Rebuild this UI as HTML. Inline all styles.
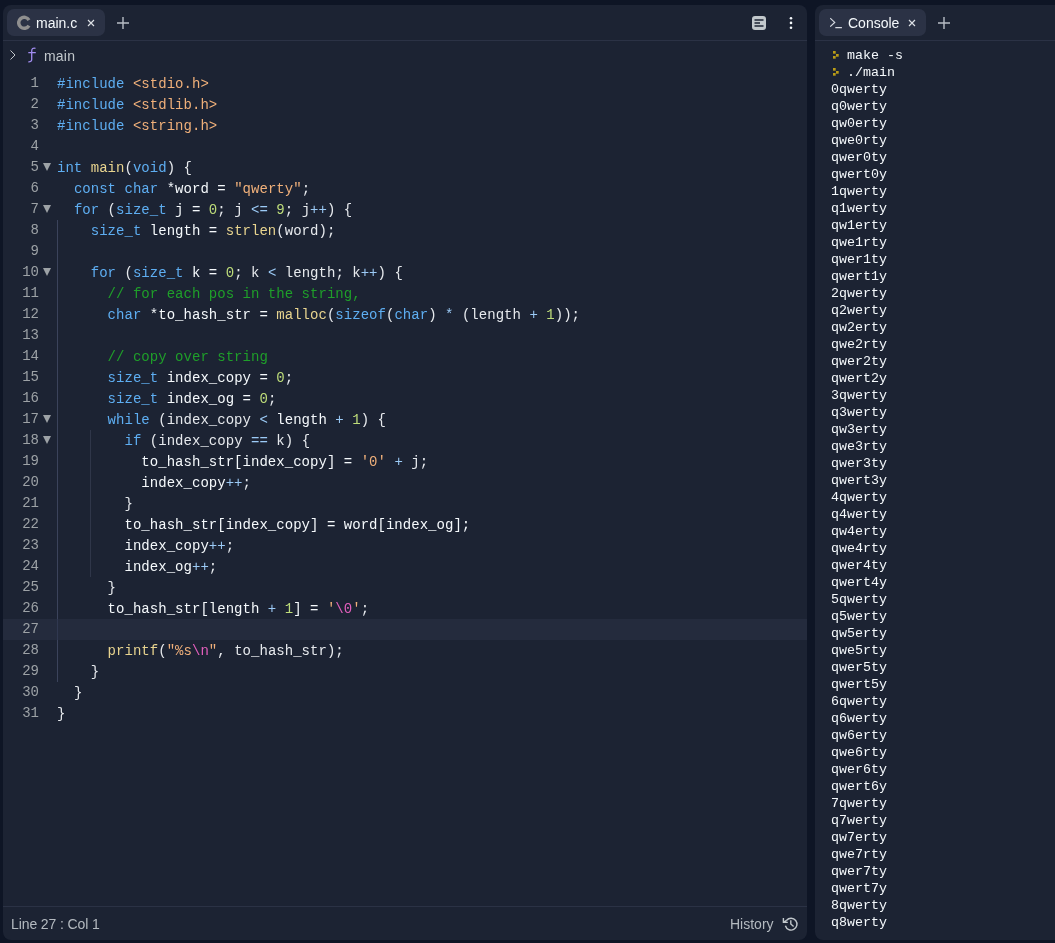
<!DOCTYPE html>
<html><head><meta charset="utf-8">
<style>
*{margin:0;padding:0;box-sizing:border-box}
html,body{width:1055px;height:943px;overflow:hidden;background:#0e1525;font-family:"Liberation Sans",sans-serif;-webkit-font-smoothing:antialiased}
.panel>*{will-change:transform}
.panel{position:absolute;background:#1c2333;border-radius:8px;overflow:hidden}
#left{left:3px;top:5px;width:804px;height:935px}
#right{left:815px;top:5px;width:260px;height:935px}
.sep{position:absolute;left:0;right:0;height:1px;background:#2b3245}
.tab{position:absolute;top:4px;height:27px;background:#2b3245;border-radius:7px}
.tabtxt{position:absolute;top:0;line-height:27px;font-size:14px;color:#f5f9fc;white-space:nowrap}
.x{position:absolute;top:0;}
.code{position:absolute;left:54px;top:68px;font-family:"Liberation Mono",monospace;font-size:14px;line-height:21px;color:#f5f9fc;letter-spacing:0.033px}
.gut{position:absolute;left:0;top:68px;width:52px;font-family:"Liberation Mono",monospace;font-size:14px;line-height:21px;color:#9da2a6}
.gn{position:relative;height:21px}
.gn b{font-weight:normal;position:absolute;right:16px;top:0}
.fd{position:absolute;left:40.2px;top:6px;width:0;height:0;border-left:4.3px solid transparent;border-right:4.3px solid transparent;border-top:8.3px solid #9da2a6}
.ln{height:21px;white-space:pre;position:relative;top:1px}
.active{position:absolute;left:0;width:804px;top:614px;height:21px;background:#242b3d}
.guide{position:absolute;width:1px}
.k{color:#5eaef2}.f{color:#e8d48f}.s{color:#f0b07a}.n{color:#bedd7a}.c{color:#1f9f2a}.o{color:#9ccbf7}.e{color:#e35fbd}.p{color:#e6e9ed}
.console{position:absolute;left:16px;top:42px;font-family:"Liberation Mono",monospace;font-size:13.33px;line-height:17px;color:#f5f9fc}
.cl{height:17px;position:relative;white-space:pre}
.cmd{position:absolute;left:16px}
.pr{position:absolute;left:2px;top:4px;width:6px;height:9px;background:linear-gradient(#b99c17,#b99c17) 0 0/2.7px 2.7px no-repeat,linear-gradient(#b99c17,#b99c17) 2.7px 2.7px/2.7px 2.7px no-repeat,linear-gradient(#b99c17,#b99c17) 0 5.4px/2.7px 2.7px no-repeat}
.status{position:absolute;top:901px;left:0;right:0;height:34px}
</style></head><body>
<div class="panel" id="left">
  <div class="tab" style="left:4px;width:98px">
    <svg style="position:absolute;left:10px;top:6px" width="16" height="16" viewBox="0 0 16 16"><path d="M11.96 5.05 A5.5 5.5 0 1 0 11.96 10.55" fill="none" stroke="#8f8f8f" stroke-width="3.5"/></svg>
    <div class="tabtxt" style="left:29px;top:1px">main.c</div>
    <svg style="position:absolute;left:80px;top:10px" width="8" height="8" viewBox="0 0 8 8"><path d="M1 1L7 7M7 1L1 7" stroke="#dde1e6" stroke-width="1.15"/></svg>
  </div>
  <svg style="position:absolute;left:114px;top:12px" width="12" height="12" viewBox="0 0 12 12"><path d="M6 0V12M0 6H12" stroke="#b7bdc5" stroke-width="1.4"/></svg>
  <svg style="position:absolute;left:749px;top:11px" width="14" height="14" viewBox="0 0 14 14"><rect x="0" y="0" width="14" height="14" rx="3" fill="#c2c8cc"/><path d="M2.5 4H11.5M2.5 7H8M2.5 10H11.5" stroke="#1c2333" stroke-width="1.5"/></svg>
  <svg style="position:absolute;left:786px;top:11px" width="4" height="14" viewBox="0 0 4 14"><circle cx="2" cy="2.3" r="1.3" fill="#f5f9fc"/><circle cx="2" cy="6.9" r="1.3" fill="#f5f9fc"/><circle cx="2" cy="11.8" r="1.3" fill="#f5f9fc"/></svg>
  <div class="sep" style="top:35px"></div>
  <svg style="position:absolute;left:7px;top:45px" width="6" height="10" viewBox="0 0 6 10"><path d="M0.5 0.5L5 5L0.5 9.5" fill="none" stroke="#c2c8cc" stroke-width="1"/></svg>
  <svg style="position:absolute;left:23px;top:41px" width="12" height="18" viewBox="0 0 12 18"><path d="M9.5 2.3Q5.7 1.5 5.7 5V13.5Q5.7 16 2.3 15.8M2.3 6.6H9.8" fill="none" stroke="#a18cef" stroke-width="1.3"/></svg>
  <div style="position:absolute;left:41px;top:42px;font-size:14px;line-height:18px;color:#c2c8cc;letter-spacing:0.2px">main</div>
  <div class="active"></div>
  <div class="guide" style="left:54px;top:215px;height:399px;background:#3b435b"></div><div class="guide" style="left:54px;top:614px;height:21px;background:#303850"></div><div class="guide" style="left:54px;top:635px;height:42px;background:#3b435b"></div>
  <div class="guide" style="left:87px;top:425px;height:147px;background:#2f3649"></div>
  <div class="gut"><div class="gn"><b>1</b></div>
<div class="gn"><b>2</b></div>
<div class="gn"><b>3</b></div>
<div class="gn"><b>4</b></div>
<div class="gn"><b>5</b><i class="fd"></i></div>
<div class="gn"><b>6</b></div>
<div class="gn"><b>7</b><i class="fd"></i></div>
<div class="gn"><b>8</b></div>
<div class="gn"><b>9</b></div>
<div class="gn"><b>10</b><i class="fd"></i></div>
<div class="gn"><b>11</b></div>
<div class="gn"><b>12</b></div>
<div class="gn"><b>13</b></div>
<div class="gn"><b>14</b></div>
<div class="gn"><b>15</b></div>
<div class="gn"><b>16</b></div>
<div class="gn"><b>17</b><i class="fd"></i></div>
<div class="gn"><b>18</b><i class="fd"></i></div>
<div class="gn"><b>19</b></div>
<div class="gn"><b>20</b></div>
<div class="gn"><b>21</b></div>
<div class="gn"><b>22</b></div>
<div class="gn"><b>23</b></div>
<div class="gn"><b>24</b></div>
<div class="gn"><b>25</b></div>
<div class="gn"><b>26</b></div>
<div class="gn"><b>27</b></div>
<div class="gn"><b>28</b></div>
<div class="gn"><b>29</b></div>
<div class="gn"><b>30</b></div>
<div class="gn"><b>31</b></div></div>
  <div class="code"><div class="ln"><span class="k">#include</span> <span class="s">&lt;stdio.h&gt;</span></div>
<div class="ln"><span class="k">#include</span> <span class="s">&lt;stdlib.h&gt;</span></div>
<div class="ln"><span class="k">#include</span> <span class="s">&lt;string.h&gt;</span></div>
<div class="ln"></div>
<div class="ln"><span class="k">int</span> <span class="f">main</span><span class="p">(</span><span class="k">void</span><span class="p">)</span> <span class="p">{</span></div>
<div class="ln">  <span class="k">const</span> <span class="k">char</span> *word = <span class="s">&quot;qwerty&quot;</span><span class="p">;</span></div>
<div class="ln">  <span class="k">for</span><span class="p"> (</span><span class="k">size_t</span> j = <span class="n">0</span><span class="p">; j </span><span class="o">&lt;=</span> <span class="n">9</span><span class="p">; j</span><span class="o">++</span><span class="p">) {</span></div>
<div class="ln">    <span class="k">size_t</span> length = <span class="f">strlen</span><span class="p">(word);</span></div>
<div class="ln"></div>
<div class="ln">    <span class="k">for</span><span class="p"> (</span><span class="k">size_t</span> k = <span class="n">0</span><span class="p">; k </span><span class="o">&lt;</span><span class="p"> length; k</span><span class="o">++</span><span class="p">) {</span></div>
<div class="ln">      <span class="c">// for each pos in the string,</span></div>
<div class="ln">      <span class="k">char</span> *to_hash_str = <span class="f">malloc</span><span class="p">(</span><span class="k">sizeof</span><span class="p">(</span><span class="k">char</span><span class="p">) </span><span class="o">*</span><span class="p"> (length </span><span class="o">+</span> <span class="n">1</span><span class="p">));</span></div>
<div class="ln"></div>
<div class="ln">      <span class="c">// copy over string</span></div>
<div class="ln">      <span class="k">size_t</span> index_copy = <span class="n">0</span><span class="p">;</span></div>
<div class="ln">      <span class="k">size_t</span> index_og = <span class="n">0</span><span class="p">;</span></div>
<div class="ln">      <span class="k">while</span><span class="p"> (index_copy </span><span class="o">&lt;</span> length <span class="o">+</span> <span class="n">1</span><span class="p">) {</span></div>
<div class="ln">        <span class="k">if</span><span class="p"> (index_copy </span><span class="o">==</span><span class="p"> k) {</span></div>
<div class="ln">          to_hash_str[index_copy] = <span class="s">&#x27;0&#x27;</span> <span class="o">+</span><span class="p"> j;</span></div>
<div class="ln">          index_copy<span class="o">++</span><span class="p">;</span></div>
<div class="ln">        <span class="p">}</span></div>
<div class="ln">        to_hash_str[index_copy] = word[index_og];</div>
<div class="ln">        index_copy<span class="o">++</span><span class="p">;</span></div>
<div class="ln">        index_og<span class="o">++</span><span class="p">;</span></div>
<div class="ln">      <span class="p">}</span></div>
<div class="ln">      to_hash_str[length <span class="o">+</span> <span class="n">1</span>] = <span class="s">&#x27;</span><span class="e">\0</span><span class="s">&#x27;</span><span class="p">;</span></div>
<div class="ln"></div>
<div class="ln">      <span class="f">printf</span><span class="p">(</span><span class="s">&quot;</span><span class="s">%s</span><span class="e">\n</span><span class="s">&quot;</span><span class="p">, to_hash_str);</span></div>
<div class="ln">    <span class="p">}</span></div>
<div class="ln">  <span class="p">}</span></div>
<div class="ln"><span class="p">}</span></div></div>
  <div class="sep" style="top:901px"></div>
  <div style="position:absolute;left:8px;top:909px;font-size:14px;line-height:20px;color:#b4bac0;letter-spacing:-0.1px">Line 27 : Col 1</div>
  <div style="position:absolute;left:727px;top:909px;font-size:14px;line-height:20px;color:#b4bac0">History</div>
  <svg style="position:absolute;left:779px;top:909px" width="20" height="20" viewBox="0 0 20 20"><path d="M4.6 6.3A5.9 5.9 0 1 1 3.4 11.8M4.6 6.3L1.8 8.2M1.4 4V8.4H5.8M8.8 6.2V10L11.6 12.5" fill="none" stroke="#c2c8cc" stroke-width="1.4"/></svg>
</div>
<div class="panel" id="right">
  <div class="tab" style="left:4px;width:107px">
    <svg style="position:absolute;left:11px;top:8px" width="13" height="12" viewBox="0 0 13 12"><path d="M0.2 1.2L4.7 5.4L0.2 9.6M5.3 10.6H11.9" fill="none" stroke="#d5d9e0" stroke-width="1.2"/></svg>
    <div class="tabtxt" style="left:29px;top:1px">Console</div>
    <svg style="position:absolute;left:89px;top:10px" width="8" height="8" viewBox="0 0 8 8"><path d="M1 1L7 7M7 1L1 7" stroke="#dde1e6" stroke-width="1.15"/></svg>
  </div>
  <svg style="position:absolute;left:123px;top:12px" width="12" height="12" viewBox="0 0 12 12"><path d="M6 0V12M0 6H12" stroke="#b7bdc5" stroke-width="1.4"/></svg>
  <div class="sep" style="top:35px"></div>
  <div class="console"><div class="cl"><i class="pr"></i><span class="cmd">make -s</span></div>
<div class="cl"><i class="pr"></i><span class="cmd">./main</span></div>
<div class="cl">0qwerty</div>
<div class="cl">q0werty</div>
<div class="cl">qw0erty</div>
<div class="cl">qwe0rty</div>
<div class="cl">qwer0ty</div>
<div class="cl">qwert0y</div>
<div class="cl">1qwerty</div>
<div class="cl">q1werty</div>
<div class="cl">qw1erty</div>
<div class="cl">qwe1rty</div>
<div class="cl">qwer1ty</div>
<div class="cl">qwert1y</div>
<div class="cl">2qwerty</div>
<div class="cl">q2werty</div>
<div class="cl">qw2erty</div>
<div class="cl">qwe2rty</div>
<div class="cl">qwer2ty</div>
<div class="cl">qwert2y</div>
<div class="cl">3qwerty</div>
<div class="cl">q3werty</div>
<div class="cl">qw3erty</div>
<div class="cl">qwe3rty</div>
<div class="cl">qwer3ty</div>
<div class="cl">qwert3y</div>
<div class="cl">4qwerty</div>
<div class="cl">q4werty</div>
<div class="cl">qw4erty</div>
<div class="cl">qwe4rty</div>
<div class="cl">qwer4ty</div>
<div class="cl">qwert4y</div>
<div class="cl">5qwerty</div>
<div class="cl">q5werty</div>
<div class="cl">qw5erty</div>
<div class="cl">qwe5rty</div>
<div class="cl">qwer5ty</div>
<div class="cl">qwert5y</div>
<div class="cl">6qwerty</div>
<div class="cl">q6werty</div>
<div class="cl">qw6erty</div>
<div class="cl">qwe6rty</div>
<div class="cl">qwer6ty</div>
<div class="cl">qwert6y</div>
<div class="cl">7qwerty</div>
<div class="cl">q7werty</div>
<div class="cl">qw7erty</div>
<div class="cl">qwe7rty</div>
<div class="cl">qwer7ty</div>
<div class="cl">qwert7y</div>
<div class="cl">8qwerty</div>
<div class="cl">q8werty</div></div>
</div>
</body></html>
